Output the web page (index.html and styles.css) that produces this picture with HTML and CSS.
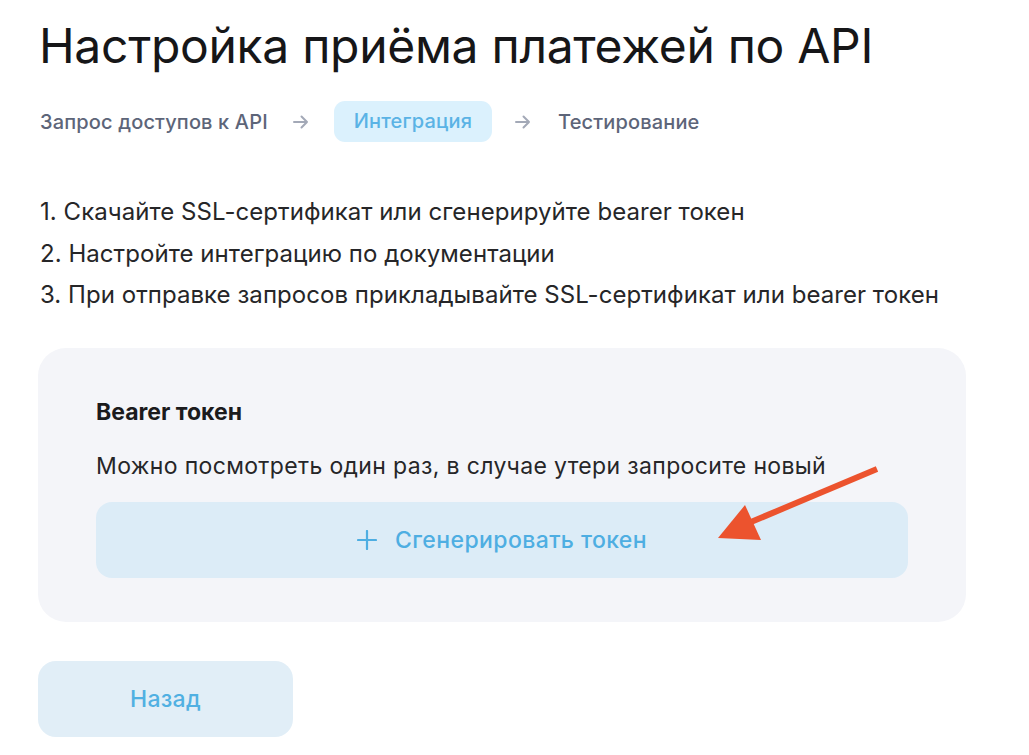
FILE: index.html
```html
<!DOCTYPE html>
<html lang="ru">
<head>
<meta charset="utf-8">
<title>Настройка приёма платежей по API</title>
<link rel="stylesheet" href="styles.css">
</head>
<body>
<main class="page">
  <h1 class="title">Настройка приёма платежей по API</h1>
  <nav class="steps">
    <span class="step">Запрос доступов к API</span>
    <svg class="step-arrow" viewBox="0 0 20 20" width="20" height="20"><path d="M3 10h13M10.5 4.5 16 10l-5.5 5.5" fill="none" stroke="#a3a9b7" stroke-width="2" stroke-linecap="round" stroke-linejoin="round"/></svg>
    <span class="step step-active">Интеграция</span>
    <svg class="step-arrow" viewBox="0 0 20 20" width="20" height="20"><path d="M3 10h13M10.5 4.5 16 10l-5.5 5.5" fill="none" stroke="#a3a9b7" stroke-width="2" stroke-linecap="round" stroke-linejoin="round"/></svg>
    <span class="step">Тестирование</span>
  </nav>
  <ol class="instructions">
    <li>1. Скачайте SSL-сертификат или сгенерируйте bearer токен</li>
    <li>2. Настройте интеграцию по документации</li>
    <li>3. При отправке запросов прикладывайте SSL-сертификат или bearer токен</li>
  </ol>
  <section class="card">
    <h2 class="card-title">Bearer токен</h2>
    <p class="card-text">Можно посмотреть один раз, в случае утери запросите новый</p>
    <button class="btn-generate" type="button">
      <svg class="plus" viewBox="0 0 20 20" width="20" height="20"><path d="M10 1v18M1 10h18" stroke="#4eaee2" stroke-width="2.2" stroke-linecap="round"/></svg>
      <span>Сгенерировать токен</span>
    </button>
    <svg class="pointer" viewBox="0 0 176 90" width="176" height="90"><path d="M170 11 L44 64" stroke="#ec532e" stroke-width="6" stroke-linecap="butt"/><path d="M11 80 L38 47 L54 82 Z" fill="#ec532e"/></svg>
  </section>
  <button class="btn-back" type="button">Назад</button>
</main>
</body>
</html>
```
FILE: styles.css
```css
* { box-sizing: border-box; }
html, body { margin: 0; padding: 0; background: #ffffff; }
body {
  font-family: Inter, "Noto Sans", "Liberation Sans", sans-serif;
  color: #1d1d1f;
}
.page {
  padding: 18px 0 0 38px;
  width: 1029px;
}
.title {
  margin: 0 0 0 1px;
  font-size: 48px;
  font-weight: 400;
  line-height: 56px;
  letter-spacing: -0.3px;
  color: #161618;
}
.steps {
  display: flex;
  align-items: center;
  margin-top: 27px;
  height: 41px;
  font-size: 20px;
  font-weight: 500;
  letter-spacing: 0.15px;
  color: #5d6579;
}
.step { padding: 0 2px; }
.step-arrow { margin: 0 23px 0 21px; }
.step-active {
  background: #dbf1fd;
  color: #5ab3e5;
  border-radius: 11px;
  height: 41px;
  line-height: 41px;
  padding: 0 20px;
}
.instructions {
  list-style: none;
  margin: 49px 0 0 2px;
  padding: 0;
  font-size: 24px;
  line-height: 41.5px;
  letter-spacing: 0.05px;
  color: #262628;
}
.card {
  position: relative;
  margin-top: 32px;
  width: 928px;
  height: 274px;
  background: #f4f5f9;
  border-radius: 28px;
  padding: 51px 58px 0 58px;
}
.card-title {
  margin: 0;
  font-size: 23px;
  font-weight: 700;
  line-height: 26px;
  color: #1b1b1d;
}
.card-text {
  margin: 28px 0 0 0;
  font-size: 23px;
  line-height: 26px;
  letter-spacing: 0.35px;
  color: #262628;
}
.btn-generate {
  display: flex;
  align-items: center;
  justify-content: center;
  gap: 18px;
  margin-top: 23px;
  width: 812px;
  height: 76px;
  border: none;
  border-radius: 16px;
  background: #dcecf7;
  color: #4eaee2;
  font-family: inherit;
  font-size: 23px;
  font-weight: 500;
  letter-spacing: 0.4px;
}
.pointer {
  position: absolute;
  left: 669px;
  top: 110px;
}
.btn-back {
  display: block;
  margin-top: 39px;
  width: 255px;
  height: 76px;
  border: none;
  border-radius: 18px;
  background: #e1eef7;
  color: #50b0e2;
  font-family: inherit;
  font-size: 23px;
  font-weight: 500;
  letter-spacing: 0.3px;
}
```
